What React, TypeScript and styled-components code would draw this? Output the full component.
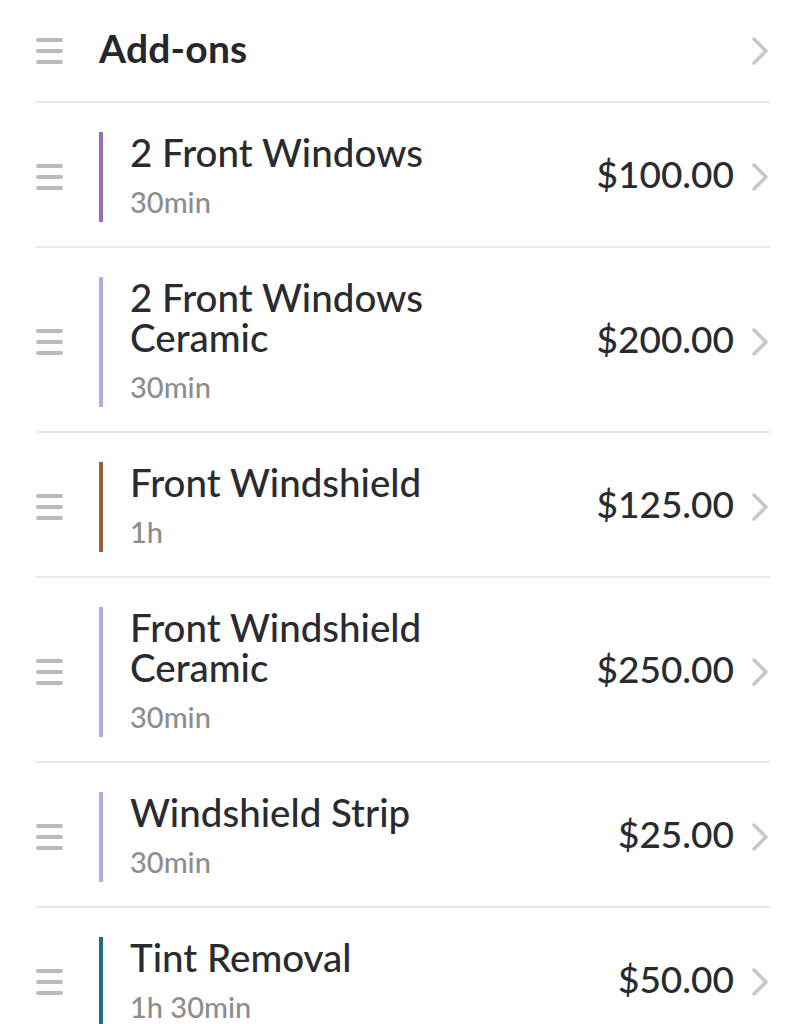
import React from 'react';
import styled, { createGlobalStyle } from 'styled-components';

const GlobalStyle = createGlobalStyle`
  body {
    margin: 0;
    background: #ffffff;
    font-family: Lato, "Open Sans", sans-serif;
    color: #2a2b30;
  }
`;

const Page = styled.div`
  padding: 0 35px 0 36px;
`;

const Header = styled.div`
  display: flex;
  align-items: center;
  height: 101px;
  border-bottom: 2px solid #e9e9eb;
`;

const HandleCell = styled.div`
  width: 63px;
  flex-shrink: 0;
  display: flex;
  align-items: center;
`;

const HeaderTitle = styled.h1`
  flex: 1;
  margin: 0 0 5px;
  font-size: 39px;
  font-weight: 700;
  letter-spacing: 0.2px;
  color: #26272c;
`;

const Row = styled.div`
  display: flex;
  align-items: center;
  padding: 29px 0 24px;
  border-bottom: 2px solid #e9e9eb;
`;

const Body = styled.div<{ $accent: string }>`
  flex: 1;
  border-left: 4px solid ${(p) => p.$accent};
  padding-left: 27px;
`;

const Title = styled.div`
  font-size: 38.5px;
  font-weight: 500;
  line-height: 40px;
  color: #2a2b30;
  max-width: 310px;
`;

const Duration = styled.div`
  font-size: 29px;
  font-weight: 500;
  line-height: 40px;
  padding-top: 10px;
  color: #8d8d8f;
`;

const Price = styled.div`
  font-size: 37px;
  font-weight: 500;
  color: #2a2b30;
  margin: 0 17px 8px 0;
`;

const Handle = () => (
  <svg width="27" height="28" viewBox="0 0 27 28">
    <g stroke="#b9b9be" strokeWidth="4" strokeLinecap="round">
      <line x1="2" y1="3" x2="25" y2="3" />
      <line x1="2" y1="14" x2="25" y2="14" />
      <line x1="2" y1="25" x2="25" y2="25" />
    </g>
  </svg>
);

const Chevron = () => (
  <svg width="19" height="30" viewBox="0 0 19 30">
    <polyline
      points="3,3 15,15 3,27"
      fill="none"
      stroke="#c6c6cb"
      strokeWidth="3.5"
      strokeLinecap="round"
      strokeLinejoin="round"
    />
  </svg>
);

const addOns = [
  { name: '2 Front Windows', time: '30min', price: '$100.00', color: '#9a6db1' },
  { name: '2 Front Windows Ceramic', time: '30min', price: '$200.00', color: '#b7aadd' },
  { name: 'Front Windshield', time: '1h', price: '$125.00', color: '#a15a38' },
  { name: 'Front Windshield Ceramic', time: '30min', price: '$250.00', color: '#b7aadd' },
  { name: 'Windshield Strip', time: '30min', price: '$25.00', color: '#b7aadd' },
  { name: 'Tint Removal', time: '1h 30min', price: '$50.00', color: '#1f6f7f' },
];

export default function App() {
  return (
    <Page>
      <GlobalStyle />
      <Header>
        <HandleCell>
          <Handle />
        </HandleCell>
        <HeaderTitle>Add-ons</HeaderTitle>
        <Chevron />
      </Header>
      {addOns.map((item) => (
        <Row key={item.name}>
          <HandleCell>
            <Handle />
          </HandleCell>
          <Body $accent={item.color}>
            <Title>{item.name}</Title>
            <Duration>{item.time}</Duration>
          </Body>
          <Price>{item.price}</Price>
          <Chevron />
        </Row>
      ))}
    </Page>
  );
}
